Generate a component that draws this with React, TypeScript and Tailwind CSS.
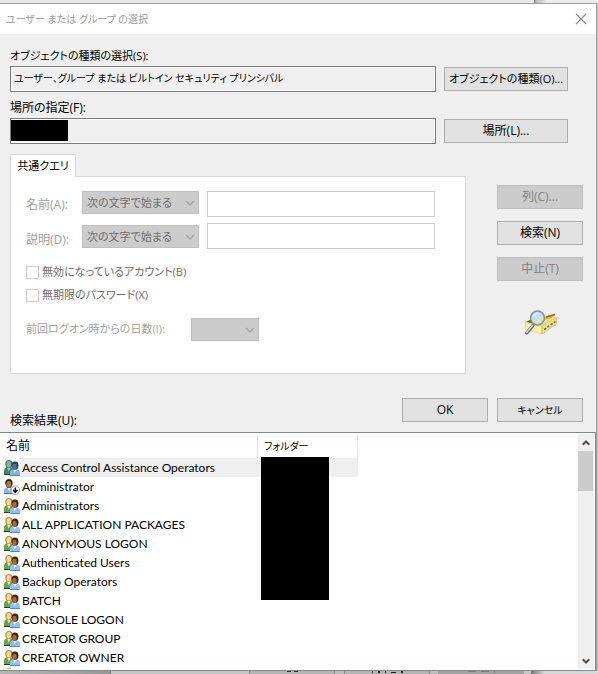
import { useId } from 'react';
import type { ReactNode } from 'react';

const names = [
  'Access Control Assistance Operators',
  'Administrator',
  'Administrators',
  'ALL APPLICATION PACKAGES',
  'ANONYMOUS LOGON',
  'Authenticated Users',
  'Backup Operators',
  'BATCH',
  'CONSOLE LOGON',
  'CREATOR GROUP',
  'CREATOR OWNER',
];

const queries = [
  { id: 'name', label: '名前(A):' },
  { id: 'description', label: '説明(D):' },
];

function GroupIcon({ dim = false }: { dim?: boolean }) {
  return (
    <svg viewBox="0 0 16 16" className="block size-4 shrink-0" aria-hidden="true">
      <path d="M0 14.500V10.500C0 8.300 2 7 4.800 7S9 8.500 9 11V14.500Z" fill={dim ? '#3f8468' : '#6ca04a'} />
      <path d="M0 14.500H7.500" stroke="#26401f" strokeWidth="1" />
      <path d="M3 7.500L4.800 11.500L6.800 7.500Z" fill={dim ? '#9fc3c0' : '#e2efc4'} />
      <path d="M1.300 5C.8 1.500 2.500 0 5 0S9 1.500 8.500 5L7.200 8H2.500Z" fill={dim ? '#4f7c60' : '#b8963e'} />
      <ellipse cx="4.800" cy="4.300" rx="2.200" ry="3.200" fill={dim ? '#8fb0a0' : '#f3d79c'} />
      <path d="M6 16V12.800C6 10.500 8 9.300 11 9.300S16 10.500 16 13V16Z" fill={dim ? '#7fb2e6' : '#94bff2'} />
      <path d="M6.500 15.600H15.500" stroke="#3e6da3" strokeWidth=".8" />
      <path d="M9 9.500L10.800 13L13 9.500Z" fill="#e4f0fc" />
      <ellipse cx="11" cy="5.600" rx="3.500" ry="4.200" fill={dim ? '#1f435f' : '#3a2414'} />
      <ellipse cx="10.500" cy="6.700" rx="2.200" ry="3" fill={dim ? '#4d7593' : '#a5683a'} />
    </svg>
  );
}

function UserDisabledIcon() {
  return (
    <svg viewBox="0 0 16 16" className="block size-4 shrink-0" aria-hidden="true">
      <path d="M0 15V11C0 9 2 8.200 5 8.200S10 9 10 11V15Z" fill="#8db9ee" />
      <path d="M0 14.600H8" stroke="#2c5583" strokeWidth=".8" />
      <path d="M3.500 8.400L5 12L7 8.400Z" fill="#eaf3fd" />
      <path d="M1.200 4.500C1 1.500 2.700 0 5 0S8.900 1.500 8.600 4.800L7 8.800H3Z" fill="#33211a" />
      <ellipse cx="4.800" cy="5.200" rx="2.300" ry="3.200" fill="#b47749" />
      <circle cx="11.300" cy="11.200" r="4.300" fill="#fff" stroke="#8a8a8a" strokeWidth=".8" />
      <path d="M11.300 8.500V12.500M9.200 11L11.300 13.300L13.400 11" fill="none" stroke="#111" strokeWidth="1.500" />
    </svg>
  );
}

function SearchBoxIcon() {
  return (
    <svg viewBox="0 0 33 27" className="h-[27px] w-[33px]" aria-hidden="true">
      <path d="M1.500 13L14 7L32.500 8L18 17Z" fill="#e9e0a0" />
      <path d="M2 13L8 10L13 15L9 15Z" fill="#5e5520" />
      <path d="M19 11L22 7.500L31 5.500L27 9.500Z" fill="#f2b51d" />
      <path d="M22 8L31 5.500" stroke="#a8630a" strokeWidth="1.300" />
      <path d="M1.500 13L18 17V25L1.500 20.500Z" fill="#f3eea9" stroke="#d5cb78" strokeWidth=".6" />
      <path d="M18 17L32.500 8.500V15L18 25Z" fill="#ede48e" stroke="#b9ad58" strokeWidth=".6" />
      <path d="M20 20.500L31.500 12.500" stroke="#77702a" strokeWidth="1.600" strokeDasharray="2.500 1.500" />
      <path d="M2.800 24L9 16.500" stroke="#66666c" strokeWidth="3.400" strokeLinecap="round" />
      <path d="M2.600 23.500L8.700 16.200" stroke="#d8d8de" strokeWidth="1.400" strokeLinecap="round" />
      <circle cx="13.500" cy="9" r="6.900" fill="#c5def7" stroke="#8490a2" strokeWidth="1.500" />
      <path d="M8 11.500L19.300 8.500C19 12 17 14.700 13.500 14.700C11 14.700 9 13.500 8 11.500Z" fill="#dde2b4" />
      <path d="M8.800 8C9.500 5.500 11.500 4 14 4C12 5.500 10.500 7 8.800 8Z" fill="#f7fbff" />
    </svg>
  );
}

function PushButton({ children, className, disabled = false }: { children: ReactNode; className: string; disabled?: boolean }) {
  return (
    <button
      type="button"
      disabled={disabled}
      className={`h-6 shrink-0 border border-[#adadad] bg-[#e1e1e1] text-center leading-[20px] whitespace-nowrap disabled:border-[#bfbfbf] disabled:bg-[#cccccc] disabled:text-[#838383] ${className}`}
    >
      {children}
    </button>
  );
}

function Drop({ id, label, className, options }: { id: string; label?: string; className: string; options: string[] }) {
  return (
    <div className={`relative h-[23px] shrink-0 ${className}`}>
      <select
        id={id}
        aria-label={label}
        disabled
        className="block h-full w-full appearance-none border border-[#bfbfbf] bg-[#cccccc] pl-1 text-[11px] leading-[20px] text-[#6d6d6d] opacity-100"
      >
        {options.map((option) => (
          <option key={option}>{option}</option>
        ))}
      </select>
      <svg viewBox="0 0 10 6" className="pointer-events-none absolute top-[9px] right-1 h-[6px] w-[10px] text-[#a0a0a0]" aria-hidden="true">
        <path d="M1 1L5 5L9 1" fill="none" stroke="currentColor" strokeWidth="1.200" />
      </svg>
    </div>
  );
}

function PathField({ label, labelSize, value, button, buttonSize, redacted = false }: { label: string; labelSize: string; value: string; button: string; buttonSize: string; redacted?: boolean }) {
  const id = useId();
  return (
    <div>
      <label htmlFor={id} className={`block h-5 leading-5 ${labelSize}`}>{label}</label>
      <div className="flex items-center gap-2">
        <div className="relative h-[26px] min-w-0 flex-1">
          <input
            id={id}
            readOnly
            defaultValue={value}
            className="block h-full w-full border border-[#7a7a7a] bg-[#efefef] px-[3px] pb-1 text-[10px] shadow-[inset_0_0_0_1px_#fff] outline-none"
          />
          {redacted && <span className="absolute top-[2px] left-px h-[21px] w-[57px] bg-black" />}
        </div>
        <PushButton className={`w-[124px] ${buttonSize}`}>{button}</PushButton>
      </div>
    </div>
  );
}

function Check({ label }: { label: string }) {
  return (
    <label className="flex h-[23px] items-center gap-[3px] text-[11px] text-[#6d6d6d]">
      <input type="checkbox" disabled className="size-[13px] appearance-none border border-[#cccccc] bg-white" />
      {label}
    </label>
  );
}

export default function App() {
  return (
    <div className="flex h-screen flex-col overflow-hidden bg-[#c4c4c6] font-['Open_Sans','Noto_Sans_CJK_JP',sans-serif] text-[12px] text-black [font-feature-settings:'palt']">
      <div className="flex h-[3px] shrink-0">
        <div className="flex-1 border-r border-[#777777] bg-[#e9e9e9]" />
        <div className="w-[63px] bg-linear-to-r from-[#b5b5b5] to-[#ececec] to-20%" />
      </div>
      <main className="mr-px flex min-h-0 flex-1 flex-col border-t border-r border-[#a0a0a0] bg-[#efefef]">
        <header className="flex h-[30px] shrink-0 items-center justify-between bg-white pr-[9px] pl-[6px] text-[#999999]">
          <h1 className="text-[10px]">ユーザー または グループ の選択</h1>
          <button type="button" aria-label="閉じる" className="size-3">
            <svg viewBox="0 0 12 12" className="size-3" aria-hidden="true">
              <path d="M1 1L11 11M11 1L1 11" stroke="#8a8a8a" strokeWidth="1.100" />
            </svg>
          </button>
        </header>

        <form className="shrink-0 pl-[10px]">
          <div className="flex flex-col gap-[6px] pt-3 pr-7">
            <PathField
              label="オブジェクトの種類の選択(S):"
              labelSize="text-[11px]"
              value="ユーザー、グループ または ビルトイン セキュリティ プリンシパル"
              button="オブジェクトの種類(O)..."
              buttonSize="text-[11px]"
            />
            <PathField label="場所の指定(F):" labelSize="text-[12px]" value="" button="場所(L)..." buttonSize="text-[12px]" redacted />
          </div>

          <div className="flex gap-[31px] pt-[10px] pr-[13px]">
            <div className="min-w-0 flex-1">
              <button type="button" role="tab" aria-selected="true" className="relative z-10 -mb-px block h-[23px] w-[66px] border border-b-0 border-[#d9d9d9] bg-white text-[11px] leading-[20px] whitespace-nowrap">
                共通クエリ
              </button>
              <fieldset className="h-[198px] border border-[#d9d9d9] bg-white pt-[14px] pr-[30px] pl-[15px]">
                <div className="flex items-start">
                  <div className="flex w-14 shrink-0 flex-col gap-[15px] pt-1 text-[#a0a0a0]">
                    {queries.map((q) => (
                      <label key={q.id} htmlFor={q.id} className="leading-5">{q.label}</label>
                    ))}
                  </div>
                  <div className="flex flex-col gap-[11px]">
                    {queries.map((q) => (
                      <Drop key={q.id} id={`${q.id}-match`} label={q.label} className="w-[117px]" options={['次の文字で始まる']} />
                    ))}
                  </div>
                  <div className="ml-2 flex min-w-0 flex-1 flex-col gap-[6px]">
                    {queries.map((q) => (
                      <input key={q.id} id={q.id} disabled className="h-[26px] w-full border border-[#cccccc] bg-white px-1" />
                    ))}
                  </div>
                </div>
                <div className="pt-[11px]">
                  <Check label="無効になっているアカウント(B)" />
                  <Check label="無期限のパスワード(X)" />
                </div>
                <div className="flex items-center pt-[11px]">
                  <label htmlFor="days" className="w-[165px] shrink-0 text-[11px] text-[#a0a0a0]">前回ログオン時からの日数(I):</label>
                  <Drop id="days" className="w-[68px]" options={['']} />
                </div>
              </fieldset>
            </div>
            <div className="flex w-[86px] flex-col items-center gap-3 pt-[31px]">
              <PushButton className="w-full" disabled>列(C)...</PushButton>
              <PushButton className="w-full">検索(N)</PushButton>
              <PushButton className="w-full" disabled>中止(T)</PushButton>
              <div className="pt-4">
                <SearchBoxIcon />
              </div>
            </div>
          </div>

          <div className="flex items-start justify-between pt-6 pr-[13px]">
            <h2 id="results" className="h-[34px] pt-[13px] leading-5">検索結果(U):</h2>
            <div className="flex gap-[9px]">
              <PushButton className="w-[86px]">OK</PushButton>
              <PushButton className="w-[86px] text-[10px]">キャンセル</PushButton>
            </div>
          </div>
        </form>

        <section aria-labelledby="results" className="flex min-h-0 flex-1 border border-l-0 border-[#828790] bg-white p-px pl-0">
          <div className="relative min-w-0 flex-1 overflow-hidden">
            <table className="w-[358px] table-fixed border-separate border-spacing-0 text-left whitespace-nowrap">
              <thead>
                <tr className="h-6">
                  <th className="w-[258px] border-r border-[#e5e5e5] p-0 pl-[6px] font-normal">名前</th>
                  <th className="border-r border-[#e5e5e5] p-0 pl-[6px] text-[10px] font-normal">フォルダー</th>
                </tr>
              </thead>
              <tbody className="font-['Lato',sans-serif]">
                {names.map((name, i) => (
                  <tr key={name} className="h-[19px]">
                    <td className="p-0 pl-1">
                      <div className="flex h-[19px] items-center">
                        {i === 1 ? <UserDisabledIcon /> : <GroupIcon dim={i === 0} />}
                        <span className={`flex-1 pl-[2px] leading-[19px] ${i === 0 ? 'bg-[#efefef]' : ''}`}>{name}</span>
                      </div>
                    </td>
                    <td className={`p-0 ${i === 0 ? 'bg-[#efefef]' : ''}`} />
                  </tr>
                ))}
                <tr>
                  <td className="p-0 pt-px pl-1"><GroupIcon /></td>
                  <td className="p-0" />
                </tr>
              </tbody>
            </table>
            <div className="absolute top-[23px] left-[261px] h-[143px] w-[68px] bg-black" />
          </div>
          <div className="flex w-4 shrink-0 flex-col items-center bg-[#efefef] text-[#505050]">
            <div className="flex h-[17px] w-full shrink-0 items-center justify-center">
              <svg viewBox="0 0 8 6" className="h-[6px] w-2" aria-hidden="true"><path d="M.7 4.800L4 1.500L7.300 4.800" fill="none" stroke="currentColor" strokeWidth="2" /></svg>
            </div>
            <div className="mr-px h-10 w-[15px] bg-[#cccccc]" />
            <div className="mt-auto flex h-[17px] w-full shrink-0 items-center justify-center">
              <svg viewBox="0 0 8 6" className="h-[6px] w-2" aria-hidden="true"><path d="M.7 1.200L4 4.500L7.300 1.200" fill="none" stroke="currentColor" strokeWidth="2" /></svg>
            </div>
          </div>
        </section>
      </main>
      <div className="flex h-[3px] shrink-0 bg-[#bdbdbd]">
        <div className="w-[111px] border-r border-[#777777] bg-linear-to-r from-[#b5b5b5] to-[#999999]" />
        <div className="flex-1 bg-[#c6c6c6]" />
        <div className="flex w-[86px] justify-center gap-[3px] border-x border-[#8a8a8a] bg-[#b4b4b4]">
          <span className="h-px w-1 bg-[#333333]" />
          <span className="h-px w-1 bg-[#333333]" />
        </div>
        <div className="ml-[9px] flex w-[86px] justify-center gap-[5px] border-x border-[#8a8a8a] bg-[#b4b4b4]">
          <span className="h-[2px] w-px bg-[#222222]" />
          <span className="h-[2px] w-[2px] bg-[#222222]" />
          <span className="h-[2px] w-px bg-[#222222]" />
          <span className="mt-px h-px w-[5px] bg-[#222222]" />
          <span className="h-[2px] w-[2px] bg-[#222222]" />
        </div>
        <div className="ml-2 flex w-[86px] justify-center gap-[5px] bg-[#a3a3a3]">
          <span className="h-px w-2 bg-[#7c7c7c]" />
          <span className="h-px w-2 bg-[#7c7c7c]" />
          <span className="h-[2px] w-px bg-[#7c7c7c]" />
        </div>
        <div className="w-[7px] bg-[#c6c6c6]" />
        <div className="w-[67px] bg-linear-to-r from-[#777777] to-[#d8d8d8] to-20%" />
      </div>
    </div>
  );
}
